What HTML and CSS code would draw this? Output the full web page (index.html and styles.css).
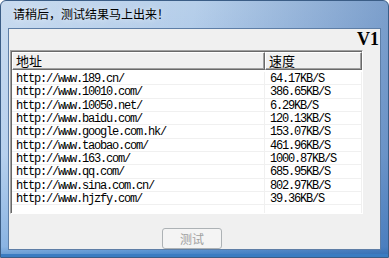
FILE: index.html
```html
<!DOCTYPE html>
<html>
<head>
    <title>Speed Test</title>
    <link rel="stylesheet" href="styles.css">
</head>
<body>
    <div class="window">
        <div class="titlebar">请稍后，测试结果马上出来！</div>
        <div class="client">
            <div class="version">V1</div>
            <div class="list">
                <div class="list-head">
                    <div class="head-cell col-url">地址</div>
                    <div class="head-cell col-speed">速度</div>
                </div>
                <div class="row"><div class="cell col-url">http://www.189.cn/</div><div class="cell col-speed">64.17KB/S</div></div>
                <div class="row"><div class="cell col-url">http://www.10010.com/</div><div class="cell col-speed">386.65KB/S</div></div>
                <div class="row"><div class="cell col-url">http://www.10050.net/</div><div class="cell col-speed">6.29KB/S</div></div>
                <div class="row"><div class="cell col-url">http://www.baidu.com/</div><div class="cell col-speed">120.13KB/S</div></div>
                <div class="row"><div class="cell col-url">http://www.google.com.hk/</div><div class="cell col-speed">153.07KB/S</div></div>
                <div class="row"><div class="cell col-url">http://www.taobao.com/</div><div class="cell col-speed">461.96KB/S</div></div>
                <div class="row"><div class="cell col-url">http://www.163.com/</div><div class="cell col-speed">1000.87KB/S</div></div>
                <div class="row"><div class="cell col-url">http://www.qq.com/</div><div class="cell col-speed">685.95KB/S</div></div>
                <div class="row"><div class="cell col-url">http://www.sina.com.cn/</div><div class="cell col-speed">802.97KB/S</div></div>
                <div class="row"><div class="cell col-url">http://www.hjzfy.com/</div><div class="cell col-speed">39.36KB/S</div></div>
                <div class="row"><div class="cell col-url"></div><div class="cell col-speed"></div></div>
            </div>
            <div class="actions">
                <button class="btn" disabled>测试</button>
            </div>
        </div>
    </div>
</body>
</html>
```

FILE: styles.css
```css
body {
    margin: 0;
    padding: 0;
    width: 389px;
    height: 258px;
    overflow: hidden;
    font-family: "Noto Sans CJK SC", sans-serif;
    font-size: 12px;
}
.window {
    box-sizing: border-box;
    height: 258px;
    display: flex;
    flex-direction: column;
    padding: 0 7px 7px;
    border: 1px solid #3b5d86;
    border-radius: 6px 6px 0 0;
    background:
        linear-gradient(100deg, rgba(255,255,255,0.25) 0%, rgba(255,255,255,0) 45%, rgba(40,90,160,0.5) 100%),
        linear-gradient(#b7cfea, #a3c3e8 60%, #6fa2dc 96%, #3d7fc4 100%);
    box-shadow: inset 0 -3px 0 #3a7cc2;
}
.titlebar {
    height: 27px;
    line-height: 26px;
    padding-left: 5px;
    color: #000;
    text-shadow: 0 0 6px rgba(255,255,255,0.8);
}
.client {
    flex: 1;
    background-color: #f0f0f0;
    border: 1px solid #5e7ea6;
    display: flex;
    flex-direction: column;
}
.version {
    height: 21px;
    text-align: right;
    padding-right: 1px;
    font-family: "Liberation Serif", serif;
    font-weight: bold;
    font-size: 18px;
    line-height: 20px;
}
.list {
    box-sizing: border-box;
    width: 353px;
    height: 164px;
    margin-left: 1px;
    background-color: white;
    border: 1px solid;
    border-color: #a0a0a0 #ffffff #ffffff #a0a0a0;
    box-shadow: inset 1px 1px 0 #696969;
    padding: 1px 0 0 1px;
    overflow: hidden;
}
.list-head {
    display: flex;
    height: 18px;
}
.head-cell {
    box-sizing: border-box;
    height: 18px;
    line-height: 16px;
    padding-left: 3px;
    background-color: #f0f0f0;
    border-top: 1px solid #ffffff;
    border-left: 1px solid #ffffff;
    border-right: 1px solid #696969;
    border-bottom: 1px solid #696969;
    box-shadow: inset -1px -1px 0 #a0a0a0;
    font-size: 13px;
}
.col-url {
    width: 253px;
}
.col-speed {
    width: 97px;
}
.row {
    display: flex;
    height: 13.33px;
    border-bottom: 1px solid #f0f0f0;
    box-sizing: border-box;
}
.list-head + .row {
    margin-top: 2px;
}
.cell {
    box-sizing: border-box;
    padding-left: 4px;
    font-family: "Liberation Mono", monospace;
    font-size: 12px;
    letter-spacing: -1.2px;
    line-height: 14px;
    white-space: nowrap;
    border-right: 1px solid #f0f0f0;
}
.cell.col-speed {
    padding-left: 5px;
}
.actions {
    padding: 14px 0 0 153px;
}
.btn {
    width: 60px;
    height: 21px;
    padding: 0;
    border: 1px solid #adb2b5;
    border-radius: 3px;
    background-color: #f4f4f4;
    color: #a0a0a0;
    font-family: "Noto Sans CJK SC", sans-serif;
    font-size: 12px;
}
```
